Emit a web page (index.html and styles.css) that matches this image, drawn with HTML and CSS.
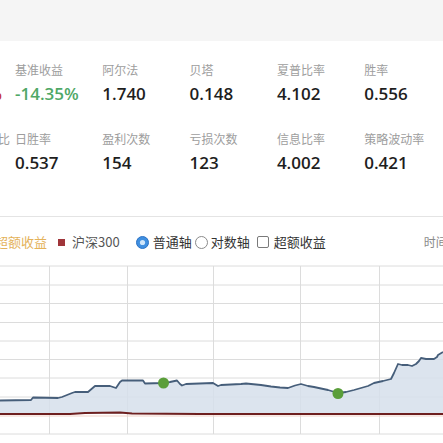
FILE: index.html
```html
<!DOCTYPE html>
<html lang="zh-CN">
<head>
<meta charset="utf-8">
<title>回测结果</title>
<link rel="stylesheet" href="styles.css">
</head>
<body>
<div class="page">
  <div class="topbar"></div>

  <div class="stats">
    <div class="row">
      <div class="cell lead"><div class="label">策略收益</div><div class="value red">132.55%</div></div>
      <div class="cell"><div class="label">基准收益</div><div class="value green">-14.35%</div></div>
      <div class="cell"><div class="label">阿尔法</div><div class="value">1.740</div></div>
      <div class="cell"><div class="label">贝塔</div><div class="value">0.148</div></div>
      <div class="cell"><div class="label">夏普比率</div><div class="value">4.102</div></div>
      <div class="cell"><div class="label">胜率</div><div class="value">0.556</div></div>
    </div>
    <div class="row">
      <div class="cell lead lead2"><div class="label">盈亏比</div><div class="value">2.017</div></div>
      <div class="cell"><div class="label">日胜率</div><div class="value">0.537</div></div>
      <div class="cell"><div class="label">盈利次数</div><div class="value">154</div></div>
      <div class="cell"><div class="label">亏损次数</div><div class="value">123</div></div>
      <div class="cell"><div class="label">信息比率</div><div class="value">4.002</div></div>
      <div class="cell"><div class="label">策略波动率</div><div class="value">0.421</div></div>
    </div>
  </div>

  <div class="divider"></div>

  <div class="legend">
    <span class="lg-text excess">超额收益</span>
    <span class="swatch"></span>
    <span class="lg-text hs">沪深300</span>
    <svg class="radio on" width="13" height="13" viewBox="0 0 13 13"><circle cx="6.5" cy="6.5" r="6" fill="#3f8fe0" stroke="#2c72c4" stroke-width="1"/><circle cx="6.5" cy="6.5" r="2.6" fill="#cfe6fb"/></svg>
    <span class="lg-text opt">普通轴</span>
    <svg class="radio off" width="13" height="13" viewBox="0 0 13 13"><circle cx="6.5" cy="6.5" r="6" fill="#fff" stroke="#8a8a8a" stroke-width="1"/></svg>
    <span class="lg-text opt">对数轴</span>
    <span class="checkbox"></span>
    <span class="lg-text opt">超额收益</span>
    <span class="time">时间</span>
  </div>

  <svg class="chart" width="443" height="185" viewBox="0 258 443 185">
    <g stroke="#dcdcdc" stroke-width="1">
      <line x1="0" y1="266" x2="443" y2="266"/>
      <line x1="0" y1="285" x2="443" y2="285"/>
      <line x1="0" y1="303.5" x2="443" y2="303.5"/>
      <line x1="0" y1="322.5" x2="443" y2="322.5"/>
      <line x1="0" y1="341" x2="443" y2="341"/>
      <line x1="0" y1="359.5" x2="443" y2="359.5"/>
      <line x1="0" y1="378" x2="443" y2="378"/>
      <line x1="0" y1="397" x2="443" y2="397"/>
      <line x1="0" y1="434" x2="443" y2="434"/>
      <line x1="49.5" y1="266" x2="49.5" y2="434"/>
      <line x1="127.5" y1="266" x2="127.5" y2="434"/>
      <line x1="213.5" y1="266" x2="213.5" y2="434"/>
      <line x1="300.5" y1="266" x2="300.5" y2="434"/>
      <line x1="379.5" y1="266" x2="379.5" y2="434"/>
    </g>
    <polygon fill="#d6dfeb" fill-opacity="0.85" points="0,400.5 31,400 33,397.5 58,398 62,397 67,395 72,393 75,392 88,392 95,386 110,386 113,387 116,388 120,382 122,380.5 143,380.5 145,383.5 163,383 170,382 177,380.5 180,384 182,385.5 186,384 213,383 218,386 221,385 241,384 246,383.5 261,385 271,386.5 280,387.5 288,388 295,385.5 301,384 308,386 314,387 328,390 338,393 346,392 354,390 361,388 368,386 374,383 383,381 391,379 394,373 398,364 402,365 408,365 412,366 416,364 419,361 421,358 426,359 434,359 437,357 438,355 443,352 443,414 0,414"/>
    <polyline fill="none" stroke="#f1d2c8" stroke-width="1" points="0,416 443,416"/>
    <polyline fill="none" stroke="#6e1f1f" stroke-width="2.2" points="0,414 70,414 85,413 120,412.5 132,413.5 200,414 443,414"/>
    <polyline fill="none" stroke="#465e7a" stroke-width="1.8" stroke-linejoin="round" points="0,400.5 31,400 33,397.5 58,398 62,397 67,395 72,393 75,392 88,392 95,386 110,386 113,387 116,388 120,382 122,380.5 143,380.5 145,383.5 163,383 170,382 177,380.5 180,384 182,385.5 186,384 213,383 218,386 221,385 241,384 246,383.5 261,385 271,386.5 280,387.5 288,388 295,385.5 301,384 308,386 314,387 328,390 338,393 346,392 354,390 361,388 368,386 374,383 383,381 391,379 394,373 398,364 402,365 408,365 412,366 416,364 419,361 421,358 426,359 434,359 437,357 438,355 443,352"/>
    <circle cx="163.5" cy="383" r="5.5" fill="#5a9e3a"/>
    <circle cx="338" cy="393.5" r="5.5" fill="#5a9e3a"/>
  </svg>
</div>
</body>
</html>
```

FILE: styles.css
```css
html, body {
  margin: 0;
  padding: 0;
  background: #ffffff;
}

body {
  width: 443px;
  height: 443px;
  overflow: hidden;
  font-family: "Noto Sans CJK SC", "Open Sans", sans-serif;
}

.page {
  width: 443px;
  height: 443px;
  overflow: hidden;
  display: flex;
  flex-direction: column;
}

.topbar {
  height: 41px;
  background: #f5f5f5;
  flex: none;
}

.stats {
  padding-top: 19px;
  display: flex;
  flex-direction: column;
  gap: 23px;
}

.row {
  display: flex;
  margin-left: -72.3px;
}

.cell {
  width: 87.3px;
  flex: none;
  white-space: nowrap;
}

.label {
  height: 20px;
  line-height: 20px;
  font-size: 12px;
  color: #9d9d9d;
  margin-bottom: 2px;
}

.value {
  height: 24px;
  line-height: 24px;
  font-family: "Open Sans", "Noto Sans CJK SC", sans-serif;
  font-size: 17px;
  color: #1e1e1e;
  font-weight: 600;
}

.value.green {
  color: #4fa866;
}

.value.red {
  color: #c8383a;
}

.lead .value {
  text-align: right;
  padding-right: 13px;
}

.lead2 .label {
  text-align: right;
  padding-right: 5px;
}

.lead2 .value {
  visibility: hidden;
}

.divider {
  margin-top: 41px;
  height: 1px;
  background: #e4e4e4;
  flex: none;
}

.legend {
  margin-top: 15px;
  height: 20px;
  display: flex;
  align-items: center;
  margin-left: -5px;
  white-space: nowrap;
  flex: none;
}

.lg-text {
  font-size: 13px;
  line-height: 20px;
  color: #333333;
}

.excess {
  color: #e4b25a;
}

.swatch {
  width: 7px;
  height: 7px;
  background: #a0353a;
  margin-left: 11px;
  margin-right: 7px;
  flex: none;
}

.hs {
  color: #555555;
}

.radio {
  flex: none;
  display: block;
}

.radio.on {
  margin-left: 16px;
  margin-right: 4px;
}

.radio.off {
  margin-left: 3px;
  margin-right: 3px;
}

.checkbox {
  width: 10px;
  height: 10px;
  border: 1px solid #7a7a7a;
  border-radius: 2px;
  background: #fff;
  margin-left: 7px;
  margin-right: 5px;
  flex: none;
}

.time {
  margin-left: 98px;
  font-size: 12px;
  color: #8a8a8a;
  line-height: 20px;
}

.chart {
  display: block;
  margin-top: 6px;
  flex: none;
}
```
